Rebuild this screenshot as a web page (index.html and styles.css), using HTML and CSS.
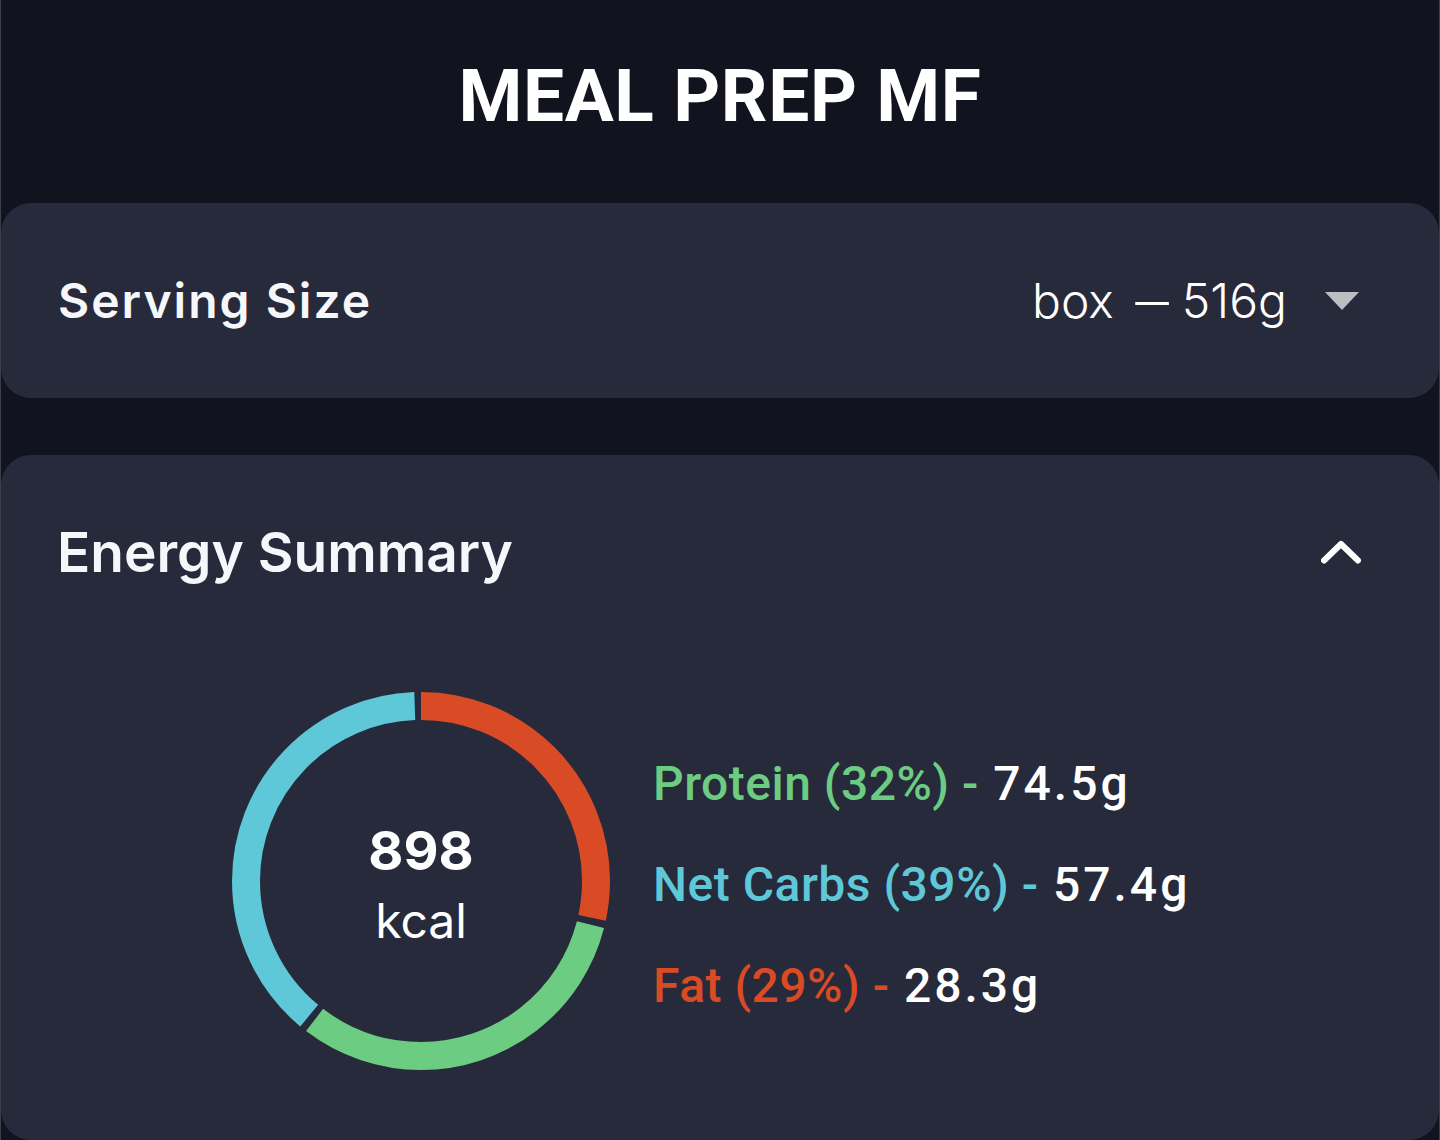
FILE: index.html
```html
<!DOCTYPE html>
<html lang="en">
<head>
<meta charset="utf-8">
<title>Meal Prep MF</title>
<link rel="stylesheet" href="styles.css">
</head>
<body>
<div class="screen">
  <header class="app-header">
    <h1 class="app-title">MEAL PREP MF</h1>
  </header>

  <section class="card serving">
    <h2 class="serving-label">Serving Size</h2>
    <div class="serving-select">
      <span class="serving-value">box<span class="serving-dash">–</span>516g</span>
      <span class="caret"></span>
    </div>
  </section>

  <section class="card energy">
    <div class="energy-head">
      <h2 class="energy-title">Energy Summary</h2>
      <svg class="chevron" width="40" height="24" viewBox="0 0 40 24" aria-hidden="true">
        <polyline points="3,20.5 20,4 37,20.5" fill="none" stroke="#ffffff" stroke-width="6" stroke-linecap="round" stroke-linejoin="round"/>
      </svg>
    </div>

    <div class="energy-body">
      <div class="donut">
        <svg class="donut-ring" width="378" height="378" viewBox="0 0 378 378" aria-hidden="true">
          <g transform="rotate(-90 189 189)">
            <circle cx="189" cy="189" r="175" fill="none" stroke="#d84b24" stroke-width="28" stroke-dasharray="312 1100" stroke-dashoffset="0"/>
            <circle cx="189" cy="189" r="175" fill="none" stroke="#6ccc82" stroke-width="28" stroke-dasharray="345 1100" stroke-dashoffset="-318.9"/>
            <circle cx="189" cy="189" r="175" fill="none" stroke="#5ec8d8" stroke-width="28" stroke-dasharray="422 1100" stroke-dashoffset="-670.8"/>
          </g>
        </svg>
        <div class="donut-label">
          <div class="kcal-num">898</div>
          <div class="kcal-unit">kcal</div>
        </div>
      </div>

      <ul class="macros">
        <li class="macro protein">Protein (32%) - <span class="macro-val">74.5g</span></li>
        <li class="macro carbs">Net Carbs (39%) - <span class="macro-val">57.4g</span></li>
        <li class="macro fat">Fat (29%) - <span class="macro-val">28.3g</span></li>
      </ul>
    </div>
  </section>
</div>
</body>
</html>
```

FILE: styles.css
```css
* {
  box-sizing: border-box;
}

html, body {
  margin: 0;
  padding: 0;
  background: #11131f;
}

body {
  font-family: Inter, "Noto Sans", sans-serif;
  color: #f6f7fb;
}

.screen {
  min-height: 1140px;
  border-left: 1px solid #3c3e49;
  border-right: 1px solid #3c3e49;
  overflow: hidden;
}

.app-header {
  height: 203px;
  display: flex;
  align-items: center;
  justify-content: center;
  padding-bottom: 10px;
}

.app-title {
  margin: 0;
  font-family: Roboto, "Liberation Sans", sans-serif;
  font-weight: 700;
  font-size: 73px;
  line-height: 1;
  letter-spacing: 0.6px;
  color: #ffffff;
}

.card {
  background: #272a3b;
  border-radius: 30px;
}

.serving {
  height: 195px;
  margin-bottom: 57px;
  padding: 0 80px 0 57px;
  display: flex;
  align-items: center;
  justify-content: space-between;
}

.serving-label {
  margin: 0;
  font-size: 48px;
  font-weight: 600;
  letter-spacing: 2px;
  color: #f6f7fb;
}

.serving-select {
  display: flex;
  align-items: center;
}

.serving-value {
  font-size: 48px;
  font-weight: 300;
  color: #ffffff;
}

.serving-dash {
  display: inline-block;
  transform: scaleX(1.4);
  margin: 0 18px 0 26px;
}

.caret {
  margin-left: 38px;
  width: 0;
  height: 0;
  border-left: 17px solid transparent;
  border-right: 17px solid transparent;
  border-top: 18px solid #bdbdc3;
}

.energy {
  height: 685px;
  padding: 57px 78px 70px 0;
}

.energy-head {
  height: 80px;
  display: flex;
  align-items: center;
  justify-content: space-between;
  padding-left: 56px;
}

.energy-title {
  margin: 0;
  font-size: 55px;
  font-weight: 600;
  line-height: 80px;
  color: #f6f7fb;
}

.chevron {
  display: block;
}

.energy-body {
  margin-top: 100px;
  padding-left: 231px;
  display: flex;
  align-items: center;
}

.donut {
  display: grid;
  width: 378px;
  height: 378px;
}

.donut-ring,
.donut-label {
  grid-area: 1 / 1;
}

.donut-ring {
  display: block;
}

.donut-label {
  align-self: center;
  justify-self: center;
  text-align: center;
  padding-top: 10px;
}

.kcal-num {
  font-size: 54px;
  font-weight: 700;
  line-height: 70px;
  letter-spacing: 0;
  color: #ffffff;
}

.kcal-unit {
  font-size: 48px;
  font-weight: 400;
  line-height: 70px;
  color: #ffffff;
}

.macros {
  list-style: none;
  margin: 0 0 0 43px;
  padding: 6px 0 0 0;
}

.macro {
  font-family: Roboto, "Liberation Sans", sans-serif;
  font-weight: 500;
  font-size: 48px;
  line-height: 101px;
  letter-spacing: 0.5px;
  white-space: nowrap;
}

.macro-val {
  color: #ffffff;
  letter-spacing: 3px;
  margin-left: 2px;
}

.protein { color: #6ccc82; }
.carbs { color: #5ec8d8; }
.fat { color: #d84b24; }
```
